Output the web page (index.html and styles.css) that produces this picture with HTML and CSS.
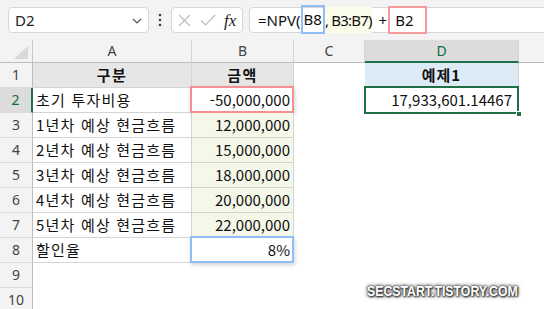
FILE: index.html
```html
<!DOCTYPE html>
<html lang="ko">
<head>
<meta charset="utf-8">
<link rel="stylesheet" href="styles.css">
</head>
<body>
<div class="app">
  <div class="toolbar">
    <div class="namebox">
      <span class="nb-text">D2</span>
      <svg class="chev" width="10" height="6" viewBox="0 0 10 6"><path d="M1 1 L5 5 L9 1" fill="none" stroke="#555" stroke-width="1.2"/></svg>
    </div>
    <div class="dots">
      <svg width="4" height="14" viewBox="0 0 4 14"><circle cx="2" cy="2" r="1.3" fill="#444"/><circle cx="2" cy="7" r="1.3" fill="#444"/><circle cx="2" cy="12" r="1.3" fill="#444"/></svg>
    </div>
    <div class="fxbox">
      <svg class="ic-x" width="13" height="13" viewBox="0 0 13 13"><path d="M1 1 L12 12 M12 1 L1 12" stroke="#bdbdbd" stroke-width="1.2" fill="none"/></svg>
      <svg class="ic-ok" width="16" height="12" viewBox="0 0 16 12"><path d="M1 6.5 L5.5 11 L15 1" stroke="#bdbdbd" stroke-width="1.2" fill="none"/></svg>
      <span class="fx">fx</span>
    </div>
    <div class="formula">
      <span class="ftxt">=NPV(</span><span class="ref ref-blue">B8</span><span class="rng">, B3:B7)</span><span class="ftxt plus">+</span><span class="ref ref-red">B2</span>
    </div>
  </div>

  <div class="sheet">
    <!-- header row -->
    <div class="corner"><svg width="14" height="13" viewBox="0 0 14 13"><polygon points="14,0 14,13 0,13" fill="#d9d9d9"/></svg></div>
    <div class="ch">A</div>
    <div class="ch">B</div>
    <div class="ch">C</div>
    <div class="ch ch-sel">D</div>
    <div class="ch ch-last"></div>

    <!-- row 1 -->
    <div class="rh">1</div>
    <div class="c bd hd">구분</div>
    <div class="c bd hd">금액</div>
    <div class="c"></div>
    <div class="c bl">예제1</div>
    <div class="c"></div>

    <!-- row 2 -->
    <div class="rh rh-sel">2</div>
    <div class="c bd ko">초기 투자비용</div>
    <div class="c bd num">-50,000,000<span class="hl hl-red"></span></div>
    <div class="c"></div>
    <div class="c num res">17,933,601.14467<span class="sel"><span class="handle"></span></span></div>
    <div class="c"></div>

    <!-- row 3 -->
    <div class="rh">3</div>
    <div class="c bd ko">1년차 예상 현금흐름</div>
    <div class="c bd num yl">12,000,000</div>
    <div class="c"></div>
    <div class="c"></div>
    <div class="c"></div>

    <!-- row 4 -->
    <div class="rh">4</div>
    <div class="c bd ko">2년차 예상 현금흐름</div>
    <div class="c bd num yl">15,000,000</div>
    <div class="c"></div>
    <div class="c"></div>
    <div class="c"></div>

    <!-- row 5 -->
    <div class="rh">5</div>
    <div class="c bd ko">3년차 예상 현금흐름</div>
    <div class="c bd num yl">18,000,000</div>
    <div class="c"></div>
    <div class="c"></div>
    <div class="c"></div>

    <!-- row 6 -->
    <div class="rh">6</div>
    <div class="c bd ko">4년차 예상 현금흐름</div>
    <div class="c bd num yl">20,000,000</div>
    <div class="c"></div>
    <div class="c"></div>
    <div class="c"></div>

    <!-- row 7 -->
    <div class="rh">7</div>
    <div class="c bd ko">5년차 예상 현금흐름</div>
    <div class="c bd num yl">22,000,000</div>
    <div class="c"></div>
    <div class="c"></div>
    <div class="c"></div>

    <!-- row 8 -->
    <div class="rh">8</div>
    <div class="c bd ko">할인율</div>
    <div class="c bd num">8%<span class="hl hl-blue"></span></div>
    <div class="c"></div>
    <div class="c"></div>
    <div class="c"></div>

    <!-- row 9 -->
    <div class="rh">9</div>
    <div class="c"></div>
    <div class="c"></div>
    <div class="c"></div>
    <div class="c"></div>
    <div class="c"></div>

    <!-- row 10 -->
    <div class="rh">10</div>
    <div class="c"></div>
    <div class="c"></div>
    <div class="c"></div>
    <div class="c"></div>
    <div class="c"></div>
  </div>

  <div class="wm">SECSTART.TISTORY.COM</div>
</div>
</body>
</html>
```

FILE: styles.css
```css
* { box-sizing: border-box; }

body {
  margin: 0;
  background: #ffffff;
  font-family: "Noto Sans", "Noto Sans CJK KR", sans-serif;
  color: #111;
}

.app {
  position: relative;
  width: 544px;
  height: 309px;
  overflow: hidden;
}

/* ---------- toolbar / formula bar ---------- */
.toolbar {
  height: 40px;
  background: #f3f3f3;
  display: flex;
  align-items: center;
  padding-left: 8px;
}

.namebox {
  width: 141px;
  height: 26px;
  background: #fff;
  border: 1px solid #d6d6d6;
  border-radius: 4px;
  display: flex;
  align-items: center;
  justify-content: space-between;
  padding: 0 6px 0 6px;
}

.nb-text {
  font-size: 15px;
  color: #222;
}

.chev { margin-top: 1px; }

.dots {
  width: 22px;
  display: flex;
  justify-content: center;
  align-items: center;
}

.fxbox {
  width: 72px;
  height: 26px;
  background: #fff;
  border: 1px solid #d6d6d6;
  border-radius: 4px;
  display: flex;
  align-items: center;
  padding-left: 6px;
}

.ic-x { margin-right: 9px; }
.ic-ok { margin-right: 8px; }

.fx {
  font-family: "Liberation Serif", serif;
  font-style: italic;
  font-size: 17px;
  color: #222;
  line-height: 1;
}

.formula {
  flex: 1;
  margin-left: 6px;
  margin-right: -10px;
  height: 26px;
  background: #fff;
  border: 1px solid #d6d6d6;
  border-radius: 4px;
  display: flex;
  align-items: center;
  padding-left: 8px;
  font-size: 15px;
  color: #111;
  white-space: pre;
}

.ref {
  height: 29px;
  line-height: 25px;
  border: 2px solid;
}

.ref-blue {
  border-color: #8ec0f5;
  padding: 0 1px;
  margin-top: -2px;
}

.ref-red {
  border-color: #f49a9a;
  padding: 0 11px 0 5px;
  margin-top: -1px;
  height: 28px;
}

.rng {
  background: #fbfbea;
  height: 26px;
  line-height: 26px;
  letter-spacing: -0.8px;
}

.plus {
  margin: 0 1px 0 7px;
}

/* ---------- sheet grid ---------- */
.sheet {
  display: grid;
  grid-template-columns: 33px 159px 102px 71px 154px 1fr;
  grid-template-rows: 23px repeat(10, 25px);
}

.corner {
  background: #f3f3f3;
  border-right: 1px solid #c8c8c8;
  border-bottom: 1px solid #bdbdbd;
  display: flex;
  align-items: flex-end;
  justify-content: flex-end;
  padding: 0 4px 3px 0;
}

.ch {
  background: #f3f3f3;
  border-right: 1px solid #d5d5d5;
  border-bottom: 1px solid #bdbdbd;
  text-align: center;
  font-size: 14px;
  line-height: 22px;
  color: #444;
}

.ch-sel {
  background: #dcdcdc;
  color: #0e6b37;
  border-bottom: 2px solid #1e7145;
}

.ch-last { border-right: none; }

.rh {
  background: #f3f3f3;
  border-right: 1px solid #bdbdbd;
  border-bottom: 1px solid #dadada;
  text-align: center;
  font-size: 14px;
  line-height: 24px;
  color: #444;
}

.rh-sel {
  background: #dcdcdc;
  color: #0e6b37;
  border-right: 2px solid #1e7145;
}

.c {
  position: relative;
  font-family: "Noto Sans CJK KR", "Noto Sans", sans-serif;
  font-size: 15px;
  line-height: 24px;
  padding: 0 3px;
  white-space: nowrap;
  color: #111;
}

.ko { letter-spacing: 1.2px; }

.bd {
  border-right: 1px solid #d4d4d4;
  border-bottom: 1px solid #d4d4d4;
}

.num { text-align: right; }

.hd {
  background: #e7e6e6;
  font-weight: bold;
  text-align: center;
  letter-spacing: 1.5px;
}

.yl { background: #f5f8e9; }

.bl {
  background: #ddebf7;
  font-weight: bold;
  text-align: center;
  letter-spacing: 1px;
  border-right: 1px solid #d4d4d4;
}

.res { padding-right: 7px; }

/* reference highlights (overlays) */
.hl {
  position: absolute;
  left: -2px;
  top: -2px;
  right: -1px;
  bottom: -1px;
  border: 2px solid;
  box-shadow: 1px 2px 4px rgba(0, 0, 0, 0.18);
}

.hl-red { border-color: #f49090; }
.hl-blue { border-color: #8ec0f5; }

.sel {
  position: absolute;
  left: -1px;
  top: -2px;
  right: 0;
  bottom: -1px;
  border: 2px solid #1e7145;
}

.handle {
  position: absolute;
  right: -5px;
  bottom: -5px;
  width: 6px;
  height: 6px;
  background: #1e7145;
  border: 1px solid #fff;
}

/* watermark */
.wm {
  position: absolute;
  left: 367px;
  top: 282px;
  font-family: "Liberation Sans", sans-serif;
  font-weight: bold;
  font-size: 15px;
  white-space: nowrap;
  transform: scaleX(0.82);
  transform-origin: left center;
  color: #ffffff;
  text-shadow: 0 0 2px #222, 1px 1px 2px #333, 0 0 4px #555, 0 0 5px #777;
}
```
